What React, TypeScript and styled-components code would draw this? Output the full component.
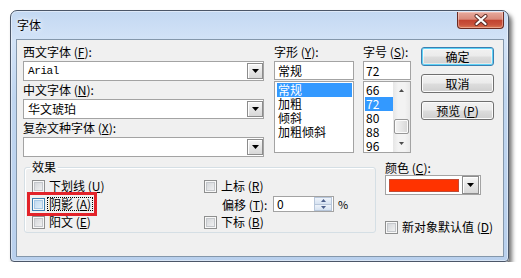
import React from 'react';
import styled, { createGlobalStyle } from 'styled-components';

const GlobalStyle = createGlobalStyle`
  html, body {
    margin: 0;
    padding: 0;
    background: #ffffff;
  }
  body {
    font-family: "Noto Sans CJK SC", "Noto Sans", sans-serif;
    font-size: 12px;
    color: #000000;
  }
  * {
    box-sizing: border-box;
  }
`;

const Page = styled.div`
  padding: 10px 0 0 10px;
`;

const Window = styled.div`
  width: 499px;
  height: 252px;
  display: flex;
  flex-direction: column;
  border: 1px solid #4b5668;
  border-radius: 7px 7px 4px 4px;
  background: linear-gradient(
    180deg,
    #c3d8f2 0%,
    #d3e3f7 12%,
    #c0d6f0 35%,
    #b9d0ed 100%
  );
  box-shadow: 3px 4px 4px rgba(0, 0, 0, 0.55), inset 0 0 0 1px rgba(255, 255, 255, 0.45);
`;

const TitleBar = styled.div`
  height: 28px;
  display: flex;
  justify-content: space-between;
  align-items: flex-start;
  padding: 0 4px 0 6px;
`;

const Title = styled.div`
  padding-top: 6px;
  line-height: 16px;
  text-shadow: 0 0 6px #ffffff, 0 0 3px #ffffff;
`;

const CloseButton = styled.div`
  width: 47px;
  height: 17px;
  margin-top: 1px;
  display: flex;
  align-items: center;
  justify-content: center;
  border: 1px solid #6a2b22;
  border-top: none;
  border-radius: 0 0 4px 4px;
  background: linear-gradient(
    180deg,
    #e6aa9d 0%,
    #d98a7b 45%,
    #c2432f 52%,
    #c9533d 80%,
    #dc7a52 100%
  );
  box-shadow: inset 0 0 0 1px rgba(255, 220, 210, 0.45);
`;

const Client = styled.div`
  flex: 1;
  margin: 0 4px 4px 5px;
  border: 1px solid #8497ab;
  background: #f0f0f0;
  display: flex;
  flex-direction: column;
`;

const TopRow = styled.div`
  display: flex;
  align-items: flex-start;
  padding: 3px 0 0 6px;
`;

const Column = styled.div<{ $w: number; $ml?: number }>`
  width: ${(p) => p.$w}px;
  margin-left: ${(p) => p.$ml || 0}px;
  display: flex;
  flex-direction: column;
`;

const FieldLabel = styled.div<{ $h?: number }>`
  height: ${(p) => p.$h || 18}px;
  line-height: ${(p) => p.$h || 18}px;
  white-space: nowrap;
`;

const Combo = styled.div`
  height: 20px;
  display: flex;
  align-items: center;
  justify-content: space-between;
  padding: 0 0 0 4px;
  border: 1px solid #a3a3a3;
  background: #ffffff;
`;

const ComboValue = styled.span<{ $mono?: boolean }>`
  font-family: ${(p) =>
    p.$mono ? '"Liberation Mono", monospace' : '"Noto Sans CJK SC", sans-serif'};
  font-size: ${(p) => (p.$mono ? 11 : 12)}px;
  letter-spacing: ${(p) => (p.$mono ? '-0.4px' : '0')};
  line-height: 18px;
`;

const DropButton = styled.div<{ $w?: number; $h?: number; $push?: boolean }>`
  width: ${(p) => p.$w || 16}px;
  height: ${(p) => p.$h || 16}px;
  margin-left: ${(p) => (p.$push ? 'auto' : '0')};
  display: flex;
  align-items: center;
  justify-content: center;
  border: 1px solid #8c8c8c;
  background: linear-gradient(180deg, #f7f7f7 0%, #e6e6e6 50%, #d8d8d8 100%);
  box-shadow: inset 1px 1px 0 #ffffff;
`;

const TextBox = styled.div<{ $pl?: number }>`
  height: 19px;
  line-height: 17px;
  padding-left: ${(p) => p.$pl || 3}px;
  border: 1px solid #a3a3a3;
  background: #ffffff;
`;

const ListBox = styled.div<{ $px: number }>`
  height: 72px;
  margin-top: 1px;
  display: flex;
  border: 1px solid #a3a3a3;
  background: #ffffff;
  padding: 0 0 0 ${(p) => p.$px}px;
  overflow: hidden;
`;

const Items = styled.div<{ $pr?: number }>`
  flex: 1;
  display: flex;
  flex-direction: column;
  padding: 1px ${(p) => p.$pr || 0}px 0 0;
`;

const ListItem = styled.div<{ $selected?: boolean }>`
  height: 14px;
  line-height: 14px;
  padding-left: 1px;
  white-space: nowrap;
  background: ${(p) => (p.$selected ? '#3399ff' : 'transparent')};
  color: ${(p) => (p.$selected ? '#ffffff' : '#000000')};
`;

const ScrollBar = styled.div`
  width: 17px;
  display: flex;
  flex-direction: column;
  background: linear-gradient(90deg, #e6e6e6 0%, #f3f3f3 30%, #f3f3f3 70%, #e9e9e9 100%);
`;

const ScrollArrow = styled.div`
  height: 17px;
  display: flex;
  align-items: center;
  justify-content: center;
`;

const ScrollTrack = styled.div`
  flex: 1;
  padding: 20px 1px 0 1px;
`;

const ScrollThumb = styled.div`
  height: 15px;
  border: 1px solid #979797;
  border-radius: 2px;
  background: linear-gradient(90deg, #f3f3f3 0%, #e6e6e6 50%, #d6d6d6 100%);
  box-shadow: inset 0 0 0 1px #fbfbfb;
`;

const ButtonColumn = styled.div`
  width: 73px;
  margin-left: 10px;
  padding-top: 4px;
  display: flex;
  flex-direction: column;
  gap: 8px;
`;

const Button = styled.div<{ $focused?: boolean }>`
  height: 19px;
  display: flex;
  align-items: center;
  justify-content: center;
  border: 1px solid ${(p) => (p.$focused ? '#3c7fb1' : '#707070')};
  border-radius: 3px;
  background: linear-gradient(180deg, #f2f2f2 0%, #ebebeb 48%, #dddddd 52%, #cfcfcf 100%);
  box-shadow: ${(p) =>
    p.$focused
      ? 'inset 0 0 0 1px #5fd3f7, inset 0 0 0 2px rgba(255,255,255,0.5)'
      : 'inset 0 0 0 1px #fbfbfb'};
  line-height: 16px;
`;

const BottomRow = styled.div`
  display: flex;
  align-items: flex-start;
  padding: 3px 0 0 7px;
`;

const GroupBox = styled.fieldset`
  width: 352px;
  height: 73px;
  margin: 0;
  padding: 0 0 0 7px;
  min-inline-size: 0;
  border: 1px solid #d5dfe5;
  border-radius: 3px;
  box-shadow: inset 1px 1px 0 #ffffff;
`;

const Legend = styled.legend`
  margin-left: -2px;
  padding: 0 2px;
  line-height: 14px;
`;

const EffectsGrid = styled.div`
  display: grid;
  grid-template-columns: 172px auto;
  grid-auto-rows: 18px;
  padding-top: 3px;
`;

const CheckItem = styled.div<{ $marked?: boolean }>`
  position: relative;
  justify-self: start;
  display: inline-flex;
  align-items: center;
  gap: 3px;
  height: 18px;
  white-space: nowrap;

  &::after {
    content: '';
    display: ${(p) => (p.$marked ? 'block' : 'none')};
    position: absolute;
    left: -5px;
    right: -5px;
    top: -3px;
    bottom: -3px;
    border: 3px solid #e2232a;
  }
`;

const Box = styled.span<{ $focused?: boolean }>`
  width: 13px;
  height: 13px;
  flex: none;
  border: 1px solid ${(p) => (p.$focused ? '#3c7fb1' : '#8e8f8f')};
  background: ${(p) =>
    p.$focused
      ? 'linear-gradient(135deg, #b9d6ee 0%, #e9f3fb 100%)'
      : 'linear-gradient(135deg, #cdd0d4 0%, #f7f7f7 100%)'};
  box-shadow: inset 0 0 0 1px #f8f8f8, inset 0 0 0 2px ${(p) => (p.$focused ? '#a8c8e6' : '#c4c7cb')};
`;

const CheckText = styled.span<{ $focused?: boolean }>`
  line-height: 12px;
  padding: 0 1px;
  outline: ${(p) => (p.$focused ? '1px dotted #000000' : 'none')};
  outline-offset: 0;
`;

const OffsetItem = styled.div`
  display: flex;
  align-items: center;
  padding-left: 18px;
  height: 18px;
`;

const OffsetLabel = styled.span`
  width: 51px;
  white-space: nowrap;
`;

const Spinner = styled.div`
  width: 61px;
  height: 16px;
  display: flex;
  align-items: center;
  border: 1px solid #a3a3a3;
  background: #ffffff;
  padding: 0 1px 0 3px;
`;

const SpinValue = styled.span`
  flex: 1;
  line-height: 14px;
`;

const SpinButtons = styled.div`
  width: 18px;
  height: 14px;
  display: flex;
  flex-direction: column;
`;

const SpinHalf = styled.div`
  flex: 1;
  display: flex;
  align-items: center;
  justify-content: center;
  background: linear-gradient(180deg, #eef3fa 0%, #d6e2f1 100%);
  border: 1px solid #b7c6da;
  &:first-child {
    border-bottom: none;
  }
`;

const Percent = styled.span`
  margin-left: 4px;
  font-size: 11px;
`;

const ColorSwatchCombo = styled.div`
  width: 96px;
  height: 20px;
  display: flex;
  align-items: center;
  padding: 0 1px 0 3px;
  border: 1px solid #a3a3a3;
  background: #ffffff;
`;

const Swatch = styled.span<{ $color: string }>`
  width: 70px;
  height: 13px;
  background: ${(p) => p.$color};
  border: 1px solid #c24a34;
`;

const Spacer = styled.div<{ $h: number }>`
  height: ${(p) => p.$h}px;
`;

const Arrow = ({ up, color = '#000000' }: { up?: boolean; color?: string }) => (
  <svg width="7" height="4" viewBox="0 0 7 4">
    <path d={up ? 'M0 4h7L3.5 0z' : 'M0 0h7L3.5 4z'} fill={color} />
  </svg>
);

const SmallArrow = ({ up, color }: { up?: boolean; color: string }) => (
  <svg width="5" height="3" viewBox="0 0 5 3">
    <path d={up ? 'M0 3h5L2.5 0z' : 'M0 0h5L2.5 3z'} fill={color} />
  </svg>
);

const CloseIcon = () => (
  <svg width="14" height="12" viewBox="0 0 14 12">
    <path d="M2.5 2l9 8M11.5 2l-9 8" stroke="#5b2a24" strokeWidth="4" strokeLinecap="round" />
    <path d="M2.5 2l9 8M11.5 2l-9 8" stroke="#ffffff" strokeWidth="2.2" strokeLinecap="round" />
  </svg>
);

const styles = ['常规', '加粗', '倾斜', '加粗倾斜'];
const sizes = ['66', '72', '80', '88', '96'];

export default function App() {
  return (
    <>
      <GlobalStyle />
      <Page>
        <Window>
          <TitleBar>
            <Title>字体</Title>
            <CloseButton>
              <CloseIcon />
            </CloseButton>
          </TitleBar>
          <Client>
            <TopRow>
              <Column $w={241}>
                <FieldLabel>西文字体 (<u>F</u>):</FieldLabel>
                <Combo>
                  <ComboValue $mono>Arial</ComboValue>
                  <DropButton>
                    <Arrow />
                  </DropButton>
                </Combo>
                <FieldLabel>中文字体 (<u>N</u>):</FieldLabel>
                <Combo>
                  <ComboValue>华文琥珀</ComboValue>
                  <DropButton>
                    <Arrow />
                  </DropButton>
                </Combo>
                <FieldLabel>复杂文种字体 (<u>X</u>):</FieldLabel>
                <Combo>
                  <ComboValue />
                  <DropButton>
                    <Arrow />
                  </DropButton>
                </Combo>
              </Column>

              <Column $w={80} $ml={10}>
                <FieldLabel>字形 (<u>Y</u>):</FieldLabel>
                <TextBox>常规</TextBox>
                <ListBox $px={2}>
                  <Items $pr={1}>
                    {styles.map((s) => (
                      <ListItem key={s} $selected={s === '常规'}>
                        {s}
                      </ListItem>
                    ))}
                  </Items>
                </ListBox>
              </Column>

              <Column $w={48} $ml={9}>
                <FieldLabel>字号 (<u>S</u>):</FieldLabel>
                <TextBox $pl={2}>72</TextBox>
                <ListBox $px={1}>
                  <Items>
                    {sizes.map((s) => (
                      <ListItem key={s} $selected={s === '72'}>
                        {s}
                      </ListItem>
                    ))}
                  </Items>
                  <ScrollBar>
                    <ScrollArrow>
                      <SmallArrow up color="#4d4d4d" />
                    </ScrollArrow>
                    <ScrollTrack>
                      <ScrollThumb />
                    </ScrollTrack>
                    <ScrollArrow>
                      <SmallArrow color="#4d4d4d" />
                    </ScrollArrow>
                  </ScrollBar>
                </ListBox>
              </Column>

              <ButtonColumn>
                <Button $focused>确定</Button>
                <Button>取消</Button>
                <Button>预览 (<u>P</u>)</Button>
              </ButtonColumn>
            </TopRow>

            <BottomRow>
              <GroupBox>
                <Legend>效果</Legend>
                <EffectsGrid>
                  <CheckItem>
                    <Box />
                    <CheckText>下划线 (<u>U</u>)</CheckText>
                  </CheckItem>
                  <CheckItem>
                    <Box />
                    <CheckText>上标 (<u>R</u>)</CheckText>
                  </CheckItem>
                  <CheckItem $marked>
                    <Box $focused />
                    <CheckText $focused>阴影 (<u>A</u>)</CheckText>
                  </CheckItem>
                  <OffsetItem>
                    <OffsetLabel>偏移 (<u>T</u>):</OffsetLabel>
                    <Spinner>
                      <SpinValue>0</SpinValue>
                      <SpinButtons>
                        <SpinHalf>
                          <SmallArrow up color="#4c5f8a" />
                        </SpinHalf>
                        <SpinHalf>
                          <SmallArrow color="#4c5f8a" />
                        </SpinHalf>
                      </SpinButtons>
                    </Spinner>
                    <Percent>%</Percent>
                  </OffsetItem>
                  <CheckItem>
                    <Box />
                    <CheckText>阳文 (<u>E</u>)</CheckText>
                  </CheckItem>
                  <CheckItem>
                    <Box />
                    <CheckText>下标 (<u>B</u>)</CheckText>
                  </CheckItem>
                </EffectsGrid>
              </GroupBox>

              <Column $w={96} $ml={9}>
                <FieldLabel $h={15}>颜色 (<u>C</u>):</FieldLabel>
                <ColorSwatchCombo>
                  <Swatch $color="#ff3300" />
                  <DropButton $w={17} $h={18} $push>
                    <Arrow />
                  </DropButton>
                </ColorSwatchCombo>
                <Spacer $h={23} />
                <CheckItem>
                  <Box />
                  <CheckText>新对象默认值 (<u>D</u>)</CheckText>
                </CheckItem>
              </Column>
            </BottomRow>
          </Client>
        </Window>
      </Page>
    </>
  );
}
